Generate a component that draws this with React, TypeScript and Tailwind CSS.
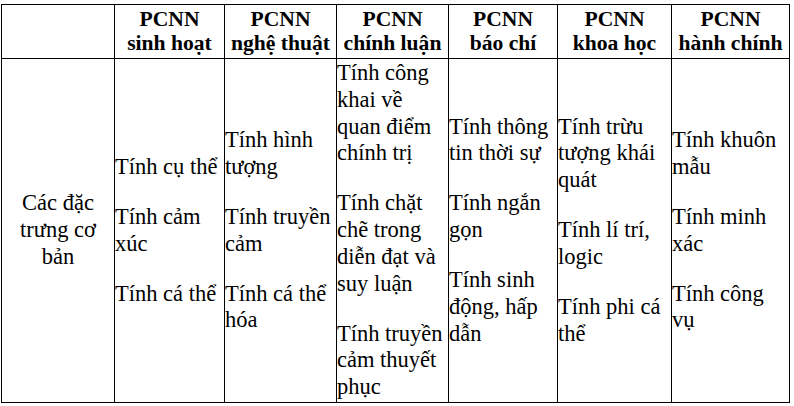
const headers = [
  ["PCNN", "sinh hoạt"],
  ["PCNN", "nghệ thuật"],
  ["PCNN", "chính luận"],
  ["PCNN", "báo chí"],
  ["PCNN", "khoa học"],
  ["PCNN", "hành chính"],
];

// each column: list of paragraphs, each paragraph = its lines as rendered
const columns: string[][][] = [
  [["Tính cụ thể"], ["Tính cảm", "xúc"], ["Tính cá thể"]],
  [["Tính hình", "tượng"], ["Tính truyền", "cảm"], ["Tính cá thể", "hóa"]],
  [
    ["Tính công", "khai về", "quan điểm", "chính trị"],
    ["Tính chặt", "chẽ trong", "diễn đạt và", "suy luận"],
    ["Tính truyền", "cảm thuyết", "phục"],
  ],
  [["Tính thông", "tin thời sự"], ["Tính ngắn", "gọn"], ["Tính sinh", "động, hấp", "dẫn"]],
  [["Tính trừu", "tượng khái", "quát"], ["Tính lí trí,", "logic"], ["Tính phi cá", "thể"]],
  [["Tính khuôn", "mẫu"], ["Tính minh", "xác"], ["Tính công", "vụ"]],
];

function Lines({ lines }: { lines: string[] }) {
  return (
    <p className="whitespace-nowrap">
      {lines.map((line, i) => (
        <span key={i} className="block">
          {line}
        </span>
      ))}
    </p>
  );
}

export default function App() {
  return (
    <div className="h-[406px] w-[794px] bg-white pl-[1px] pt-[4px] font-['Liberation_Serif','Times_New_Roman',serif] text-black">
      <div className="grid w-[789px] grid-cols-[112px_109px_111px_111px_108px_113px_117px] grid-rows-[53px_343px] gap-px bg-black p-px">
        <div className="bg-white" />
        {headers.map((h, i) => (
          <div key={i} className="bg-white pt-[2px] text-center text-[21.6px] font-bold leading-[24px] whitespace-nowrap">
            <span className="block">{h[0]}</span>
            <span className="block">{h[1]}</span>
          </div>
        ))}

        <div className="flex flex-col justify-center bg-white text-center text-[22.5px] leading-[26.7px]">
          <span>Các đặc</span>
          <span>trưng cơ</span>
          <span>bản</span>
        </div>
        {columns.map((col, i) => (
          <div key={i} className="flex flex-col justify-center gap-[23.5px] bg-white text-[22.5px] leading-[26.7px]">
            {col.map((para, j) => (
              <Lines key={j} lines={para} />
            ))}
          </div>
        ))}
      </div>
    </div>
  );
}
